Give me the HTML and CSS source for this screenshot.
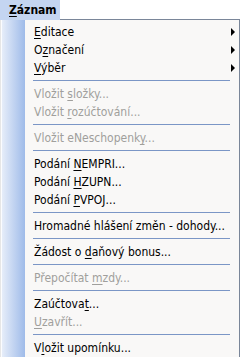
FILE: index.html
```html
<!DOCTYPE html>
<html lang="cs">
<head>
  <meta charset="UTF-8">
  <meta name="viewport" content="width=device-width, initial-scale=1.0">
  <title>Záznam</title>
  <link rel="stylesheet" href="styles.css">
</head>
<body>
  <div class="bar">
    <div class="tab"><u>Z</u>áznam</div>
    <div class="bar-rest"></div>
  </div>
  <ul class="menu">
    <li class="item sub"><span><u>E</u>ditace</span></li>
    <li class="item sub"><span>O<u>z</u>načení</span></li>
    <li class="item sub"><span><u>V</u>ýběr</span></li>
    <li class="sep"></li>
    <li class="item off"><span>Vložit <u>s</u>ložky...</span></li>
    <li class="item off"><span>Vložit <u>r</u>ozúčtování...</span></li>
    <li class="sep"></li>
    <li class="item off"><span>Vložit eNeschopenk<u>y</u>...</span></li>
    <li class="sep"></li>
    <li class="item"><span>Podání <u>N</u>EMPRI...</span></li>
    <li class="item"><span>Podání <u>H</u>ZUPN...</span></li>
    <li class="item"><span>Podání <u>P</u>VPOJ...</span></li>
    <li class="sep"></li>
    <li class="item"><span>Hromadné hlášení změn - dohody...</span></li>
    <li class="sep"></li>
    <li class="item"><span>Žádost o <u>d</u>aňový bonus...</span></li>
    <li class="sep"></li>
    <li class="item off"><span>Přepočítat <u>m</u>zdy...</span></li>
    <li class="sep"></li>
    <li class="item"><span>Zaúčtova<u>t</u>...</span></li>
    <li class="item off"><span><u>U</u>zavřít...</span></li>
    <li class="sep"></li>
    <li class="item"><span>V<u>l</u>ožit upomínku...</span></li>
  </ul>
</body>
</html>
```

FILE: styles.css
```css
body { margin: 0; background: #fff; font-family: "DejaVu Sans Condensed", "DejaVu Sans", sans-serif; font-size: 12px; color: #000; }
u { text-decoration: underline; text-underline-offset: 2px; }

.bar { display: flex; height: 20px; }
.tab { width: 51px; padding-left: 9px; line-height: 20px; font-weight: bold; font-size: 12px; background: #c4d5f1; }
.bar-rest { flex: 1; border-bottom: 1px solid #7a8699; height: 20px; box-sizing: border-box; }

.menu {
  list-style: none; margin: 0; padding: 3px 0 0 0;
  width: 240px; box-sizing: border-box; border-right: 1px solid #7a8699;
  background: linear-gradient(to right, #e6e6e6 0 1px, #fbfcfe 1px 2px, #e6edf9 2px, #9fbbe9 25px, #f9f8f7 25px);
}
.item { display: flex; justify-content: space-between; align-items: center; height: 18px; padding: 0 4px 0 34px; white-space: nowrap; }
.item.off { color: #a09f9c; }
.item.sub::after { content: ""; border-left: 4px solid #000; border-top: 4px solid transparent; border-bottom: 4px solid transparent; }
.sep { height: 1px; margin: 3px 9px 4px 33px; background: #7b96c6; }
```
